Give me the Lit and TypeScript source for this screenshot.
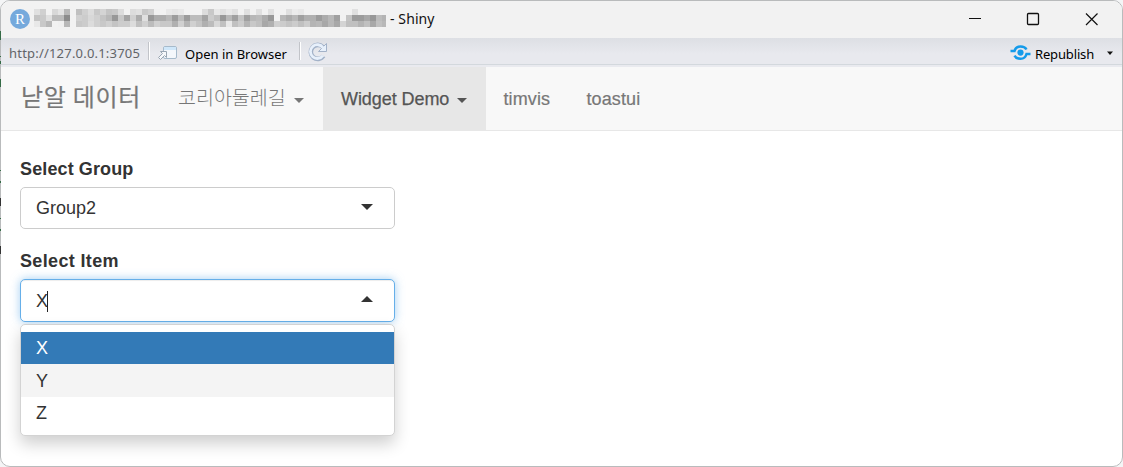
import { LitElement, html, css, svg } from "lit";
import { customElement, state } from "lit/decorators.js";

// Grey levels of the redacted window title, one string per row, two hex digits per cell.
const MOSAIC = [
  "e0d0f2d8e4b8f2c0d0dcc8d4c4c8dcf2dce0c8d0f0f2e8e4e8f2f2f2dcc8e8e0e8e0f2e0f2e0f2e0f2f2e0ece8f2f2f2f2f2f2f2f2e0f2f2f2f2f2",
  "c4cae0bcbc8cf2d0ccd8d0c4b898c8a4d0ace098acacb89cbc9cbcbca4ccc098b8a0c4a0b8bcac98f2b8acb8a0b0b09cacb8a0f2c49c9ca898bcb4",
  "e8c8b8f2f0b8f2c8ccdcd0c8d0c4ccccdcc0d0bcd0c8c8b0d0b4d0c4b0bcd8c0e8c0ccb4c8c0a8b0d0ccc4ccc0ccb4b8a8b8a8d4c0c0b4c0a8c0b8",
];

@customElement("app-root")
export class AppRoot extends LitElement {
  @state() private group = "Group2";
  @state() private item = "X";
  private items = ["X", "Y", "Z"];

  static styles = css`
    :host { display: block; width: 1123px; height: 467px; background: #f4f5f6; overflow: hidden; font-family: "Liberation Sans", Arial, sans-serif; color: #333; }
    * { box-sizing: border-box; }
    .window { position: relative; height: 467px; border: 1px solid #b9bbbc; border-radius: 10px; background: #fff; overflow: hidden; display: flex; flex-direction: column; }
    .titlebar { height: 37px; flex: none; background: #f2f2f2; display: flex; align-items: center; padding-left: 9px; font: 14px "Noto Sans", sans-serif; color: #111; }
    .logo { width: 20px; height: 20px; margin-bottom: 1px; border-radius: 50%; background: #75a9dc; color: #fff; font: 15px/20px "Liberation Serif", serif; text-align: center; flex: none; }
    .mosaic { margin: 0 4px 3px 4px; flex: none; display: block; }
    .title { letter-spacing: .1px; margin-top: -2px; }
    .controls { margin-left: auto; display: flex; }
    .controls svg { width: 58px; height: 37px; display: block; }
    .toolbar { height: 29px; flex: none; background: linear-gradient(#dddfe4, #e8e9ee 55%); box-shadow: inset 0 -2px #e9eaef, inset 0 -3px #d3d8dd; display: flex; align-items: center; padding: 1px 8px 0 8px; font: 13px "Noto Sans", sans-serif; color: #000; }
    .url { color: #626468; width: 140px; white-space: nowrap; letter-spacing: .2px; }
    .sep { width: 2px; height: 18px; background: linear-gradient(90deg, #c2c4c9 50%, #fff 50%); flex: none; margin-bottom: 4px; }
    .sep.first { margin-left: -1px; }
    .sep.after-open { margin-left: -14px; }
    .window-icon { margin: 0 0 1px 8px; }
    .refresh { margin: 0 0 3px 7px; }
    .publish-icon { margin: 0 0 1px auto; }
    .open { margin-left: 7px; width: 128px; padding-top: 2px; white-space: nowrap; }
    .toolbar svg { flex: none; }
    .republish { margin-left: 4px; width: 71px; padding-top: 2px; white-space: nowrap; letter-spacing: -.15px; }
    .navbar { height: 64px; flex: none; background: #f8f8f8; border-bottom: 1px solid #e7e7e7; display: flex; font-size: 18px; color: #777; }
    .brand { width: 159px; padding: 15px 0 0 20px; font: 400 24px/28px "Noto Sans CJK KR", sans-serif; letter-spacing: .7px; white-space: nowrap; -webkit-text-stroke: .2px; }
    .nav { display: flex; align-items: center; white-space: nowrap; padding-top: 1px; }
    .korean { width: 163px; padding: 0 0 3px 18px; font: 300 19.5px/24px "Noto Sans CJK KR", sans-serif; }
    .active { width: 163px; padding-left: 18px; background: #e7e7e7; color: #555; letter-spacing: -.07px; -webkit-text-stroke: .25px; }
    .plain { padding-left: 17.5px; letter-spacing: .1px; -webkit-text-stroke: .2px; }
    .timvis { width: 83px; }
    .caret { width: 0; height: 0; border: 5px solid transparent; border-top-color: currentColor; border-bottom: 0; margin: 2px 0 0 8px; }
    .korean .caret { margin-top: 6px; }
    .content { padding: 27px 0 0 19px; width: 394px; font-size: 18px; }
    .label { font-weight: 700; line-height: 22px; height: 29px; letter-spacing: .12px; }
    .label.second { margin-top: 21px; letter-spacing: .35px; }
    .select { width: 375px; height: 42px; border: 1px solid #ccc; border-radius: 5px; padding: 0 21px 0 15px; display: flex; align-items: center; justify-content: space-between; background: #fff; }
    .select.open-box { height: 43px; border-color: #66afe9; box-shadow: inset 0 1px 1px rgba(0,0,0,.075), 0 0 10px rgba(102,175,233,.6); }
    .value { display: flex; align-items: center; padding-top: 1px; }
    .value .cursor { margin-left: -1px; }
    .cursor { width: 1px; height: 21px; background: #222; }
    .arrow { width: 0; height: 0; border: 6px solid transparent; border-top-color: #333; border-bottom: 0; margin-bottom: 2px; }
    .arrow.up { border-bottom: 6px solid #333; border-top: 0; margin-bottom: 3px; }
    .anchor { position: relative; }
    .menu { position: absolute; top: 45px; left: 0; width: 375px; height: 112px; border: 1px solid #d3d3d3; background: #fff; border-radius: 5px; padding: 7px 0; box-shadow: 0 8px 16px rgba(0,0,0,.19); }
    .option { height: 33px; line-height: 33px; padding-left: 15px; }
    .option:first-child { height: 32px; line-height: 32px; }
    .option.selected { background: #337ab7; color: #fff; }
    .option.hover { background: #f4f4f4; line-height: 34px; }
    .edge { position: absolute; left: 0; top: 0; width: 1px; height: 467px; display: block; }
  `;

  private mosaic() {
    return html`<svg class="mosaic" width="352" height="18" shape-rendering="crispEdges" aria-hidden="true">
      ${MOSAIC.map((row, y) => (row.match(/../g) ?? []).map((c, x) =>
        svg`<rect x=${x * 6} y=${y * 6} width="6" height="6" fill=${"#" + c + c + c}></rect>`))}
    </svg>`;
  }

  render() {
    return html`
      <div class="window">
        <div class="titlebar">
          <span class="logo">R</span>
          ${this.mosaic()}
          <span class="title">- Shiny</span>
          <div class="controls">
            <svg viewBox="0 0 58 37"><path d="M21 17.500h12" stroke="#111" fill="none"/></svg>
            <svg viewBox="0 0 58 37"><rect x="21.500" y="12.500" width="11" height="11" rx="1" stroke="#111" stroke-width="1.300" fill="none"/></svg>
            <svg viewBox="0 0 58 37"><path d="M22 12.500l11.500 11.500M33.500 12.500L22 24" stroke="#111" stroke-width="1.200" fill="none"/></svg>
          </div>
        </div>
        <div class="toolbar">
          <span class="url">http://127.0.0.1:3705</span>
          <span class="sep first"></span>
          <svg class="window-icon" width="20" height="18" viewBox="0 0 20 18">
            <rect x="5.500" y="2.500" width="13" height="12" rx="1.500" fill="#f4f7fb" stroke="#a6bacb"/>
            <path d="M6 3h12v3H6z" fill="#cfe7fa"/>
            <path d="M2.500 7.500h6v6l-2-2-4 4-2-2 4-4z" fill="#f7f8fa" stroke="#9aa6b3"/>
          </svg>
          <span class="open">Open in Browser</span>
          <span class="sep after-open"></span>
          <svg class="refresh" width="20" height="20" viewBox="0 0 20 20">
            <path d="M15.500 14A7 7 0 1 1 14.800 5" fill="none" stroke="#a3b2c8" stroke-width="4.600"/>
            <path d="M18.500 1.500v8h-8z" fill="#e7f0fb" stroke="#a3b2c8"/>
            <path d="M15 13.500A6.900 6.900 0 1 1 15 5.700" fill="none" stroke="#e7f0fb" stroke-width="2.800"/>
          </svg>
          <svg class="publish-icon" width="21" height="18" viewBox="0 0 21 18">
            <g fill="none" stroke="#149bea" stroke-width="2.500">
              <path d="M0.500 7h4c1-3.500 3-4.600 6-4.600 3.200 0 5 1.200 6 3.100"/>
              <path d="M20.500 10h-4c-1 3.500-3 4.800-6 4.800-3.200 0-5-1.200-6-3.100"/>
            </g><circle cx="10.500" cy="8.600" r="3.100" fill="#149bea"/>
          </svg>
          <span class="republish">Republish</span>
          <svg width="8" height="5" viewBox="0 0 8 5"><path d="M1 .5h6L4 4z" fill="#111"/></svg>
        </div>
        <nav class="navbar">
          <div class="brand">낟알 데이터</div>
          <div class="nav korean"><span>코리아둘레길</span><i class="caret"></i></div>
          <div class="nav active"><span>Widget Demo</span><i class="caret"></i></div>
          <div class="nav plain timvis">timvis</div>
          <div class="nav plain">toastui</div>
        </nav>
        <main class="content">
          <div class="label">Select Group</div>
          <div class="select"><span>${this.group}</span><i class="arrow"></i></div>
          <div class="label second">Select Item</div>
          <div class="anchor">
            <div class="select open-box">
              <span class="value">${this.item}<i class="cursor"></i></span><i class="arrow up"></i>
            </div>
            <div class="menu">
              ${this.items.map((name, i) => html`<div class="option ${name === this.item ? "selected" : i === 1 ? "hover" : ""}">${name}</div>`)}
            </div>
          </div>
        </main>
      </div>
      <svg class="edge" width="1" height="467" aria-hidden="true">
        <path d="M.5 31v9M.5 56v1M.5 61v3M.5 79v8M.5 170v1M.5 181v2M.5 218v1M.5 229v2" stroke="#356b46"/>
        <path d="M.5 198v8M.5 246v8" stroke="#333"/>
      </svg>
    `;
  }
}
